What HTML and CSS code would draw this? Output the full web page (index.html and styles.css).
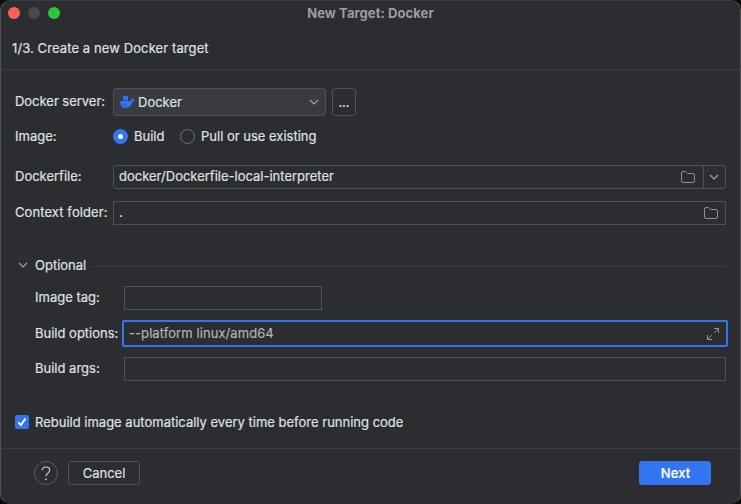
FILE: index.html
```html
<!DOCTYPE html>
<html lang="en">
<head>
<meta charset="utf-8">
<title>New Target: Docker</title>
<link rel="stylesheet" href="styles.css">
</head>
<body>
<div class="window">
  <header class="titlebar">
    <div class="lights"><i class="light red"></i><i class="light gray"></i><i class="light green"></i></div>
    <div class="title">New Target: Docker</div>
  </header>
  <div class="step">1/3. Create a new Docker target</div>
  <main class="form">
    <div class="row server">
      <label class="label">Docker server:</label>
      <div class="combo">
        <svg class="whale" width="15" height="14" viewBox="0 0 15 14"><path fill="#3574f0" d="M3 1h5v4.500000H3zM0 6h10.500000q.7-.5.8-1.300000-.3-1.300000.5-2 .9.700000.9 2h2.200000q-.5 1.900000-2.600000 2.100000Q11 13 5.800000 13 0 13 0 6z"/><path fill="#30363f" d="M3 9h1v1H3zM5 10.500000h1.500000v.8H5z"/></svg>
        <span class="combo-text">Docker</span>
        <svg class="chev" width="10" height="6" viewBox="0 0 10 6"><path d="M1 1l4 4 4-4"/></svg>
      </div>
      <div class="more">...</div>
    </div>
    <div class="row image">
      <div class="label">Image:</div>
      <i class="radio on"></i><span class="build">Build</span>
      <i class="radio"></i><span class="pull">Pull or use existing</span>
    </div>
    <div class="row dockerfile">
      <label class="label">Dockerfile:</label>
      <div class="field rounded">
        <span class="value">docker/Dockerfile-local-interpreter</span>
        <svg class="folder" width="14" height="12" viewBox="0 0 14 12"><path d="M.5 10V2Q.5.5 2 .5h2.500000L6.500000 2.500000h5.500000q1.500000 0 1.500000 1.500000v6q0 1.500000-1.500000 1.500000H2Q.5 11.500000.5 10z"/></svg>
        <div class="drop"><svg class="chev" width="10" height="6" viewBox="0 0 10 6"><path d="M1 1l4 4 4-4"/></svg></div>
      </div>
    </div>
    <div class="row context">
      <label class="label">Context folder:</label>
      <div class="field">
        <span class="value">.</span>
        <svg class="folder" width="14" height="12" viewBox="0 0 14 12"><path d="M.5 10V2Q.5.5 2 .5h2.500000L6.500000 2.500000h5.500000q1.500000 0 1.500000 1.500000v6q0 1.500000-1.500000 1.500000H2Q.5 11.500000.5 10z"/></svg>
      </div>
    </div>
    <div class="group">
      <svg class="chev" width="10" height="6" viewBox="0 0 10 6"><path d="M1 1l4 4 4-4"/></svg>
      <span class="group-title">Optional</span><i class="rule"></i>
    </div>
    <div class="row nested tag"><label class="label">Image tag:</label><div class="field short"></div></div>
    <div class="row nested options">
      <label class="label">Build options:</label>
      <div class="field focused">
        <span class="value">--platform linux/amd64</span>
        <svg class="expand" width="12" height="12" viewBox="0 0 12 12"><path d="M7 .5h4.500000V5M11.500000.5 7.200000 4.800000M.5 7v4.500000H5M.5 11.500000l4.300000-4.300000"/></svg>
      </div>
    </div>
    <div class="row nested args"><label class="label">Build args:</label><div class="field"></div></div>
    <div class="check-row">
      <span class="checkbox"><svg width="14" height="14" viewBox="0 0 14 14"><path d="M3.300000 7.200000l2.600000 2.800000 4.600000-6.600000"/></svg></span>
      <span>Rebuild image automatically every time before running code</span>
    </div>
  </main>
  <footer class="footer">
    <div class="help"><svg width="10" height="15" viewBox="0 0 10 15"><path d="M1.300000 4.300000Q1.300000 1 5 1t3.700000 3.100000Q8.700000 5.600000 7 6.900000 5 8.200000 5 10.300000"/><circle cx="5" cy="13.300000" r=".9"/></svg></div>
    <div class="btn cancel">Cancel</div>
    <div class="btn next">Next</div>
  </footer>
</div>
</body>
</html>
```
FILE: styles.css
```css
* { box-sizing: border-box; }
body {
  margin: 0;
  background: #0b0b0d;
  color: #dfe1e5;
  font: 13px/16px Inter, sans-serif;
  -webkit-text-stroke: .2px;
  overflow: hidden;
}
.window {
  width: 741px;
  height: 504px;
  background: #2b2d30;
  border: 1px solid #515356;
  border-top-color: #3b3c3f;
  border-bottom-color: #303135;
  border-radius: 10px;
  display: flex;
  flex-direction: column;
  white-space: nowrap;
}
svg { display: block; fill: none; flex: none; }
.titlebar { height: 26px; display: grid; grid-template-columns: 1fr auto 1fr; align-items: center; }
.lights { display: flex; gap: 8px; padding: 0 0 2px 7px; }
.light { width: 12px; height: 12px; border-radius: 50%; }
.red { background: #ff5f57; }
.gray { background: #48494b; }
.green { background: #28c840; }
.title { color: #9c9da0; font-weight: 700; padding-bottom: 2px; letter-spacing: .07px; -webkit-text-stroke: 0; }
.step { height: 43px; padding: 13px 0 0 11px; border-bottom: 1px solid #3c3e42; letter-spacing: .1px; }
.form { padding: 18px 14px 0; height: 378px; }
.row { display: flex; align-items: center; height: 24px; }
.label { width: 98px; flex: none; }
.server .label, .dockerfile .label, .context .label,
.dockerfile .value, .context .value { padding-bottom: 2px; }
.server .label { letter-spacing: -.03px; }
.context .label { letter-spacing: .09px; }
.server { height: 28px; }
.combo {
  width: 213px; height: 28px; border: 1px solid #4e5157; border-radius: 3px;
  background: #393b40; display: flex; align-items: center; padding: 0 6px;
}
.combo-text { flex: 1; margin-left: 3px; }
.chev path { stroke: #a4a8af; stroke-width: 1.1; }
.more {
  width: 24px; height: 28px; margin-left: 6px; border: 1px solid #4e5157;
  border-radius: 3px; text-align: center; line-height: 27px;
}
.image { margin-top: 8px; }
.radio { width: 15px; height: 15px; border: 1px solid #6f737a; border-radius: 50%; flex: none; margin-right: 6px; }
.radio.on { border: 5px solid #3574f0; background: #fff; }
.build { width: 46px; }
.dockerfile { margin-top: 17px; }
.field { height: 24px; flex: 1; border: 1px solid #4e5157; display: flex; align-items: center; padding-left: 5px; padding-right: 7px; }
.rounded { border-radius: 3px; padding-right: 0; }
.value { flex: 1; }
.folder path { stroke: #8c9097; }
.drop { width: 22px; height: 22px; margin-left: 8px; padding-right: 1px; border-left: 1px solid #4e5157; display: flex; align-items: center; justify-content: center; }
.context { margin-top: 12px; }
.group { display: flex; align-items: center; height: 16px; margin-top: 32px; padding-left: 3px; }
.group-title { margin-left: 7px; }
.rule { flex: 1; height: 1px; margin: 2px 0 0 6px; background: #3c3e42; }
.nested { padding-left: 20px; }
.nested .label { width: 89px; padding-bottom: 2px; }
.tag { margin-top: 13px; }
.field.short { flex: none; width: 198px; }
.options { margin-top: 10px; height: 27px; }
.focused { height: 27px; border: 2px solid #3574f0; border-radius: 2px; margin: 0 -2px; padding: 0 7px 0 5px; color: #b0b2b6; }
.focused .value { letter-spacing: .07px; padding-bottom: 1px; }
.expand path { stroke: #8f9297; }
.args { margin-top: 10px; }
.check-row { display: flex; align-items: center; height: 16px; margin-top: 33px; }
.checkbox { width: 14px; height: 14px; margin-right: 6px; background: #3574f0; border-radius: 2px; }
.checkbox path { stroke: #fff; stroke-width: 1.8; }
.footer { flex: 1; border-top: 1px solid #3c3e42; display: flex; align-items: flex-start; padding: 12px 29px 0 33px; }
.help { width: 24px; height: 24px; border: 1px solid #5a5d63; border-radius: 50%; display: grid; place-items: center; }
.help path { stroke: #ced0d6; stroke-width: 1.2; }
.help circle { fill: #ced0d6; }
.btn { width: 72px; height: 24px; border: 1px solid #4e5157; border-radius: 3px; text-align: center; line-height: 23px; }
.cancel { margin-left: 10px; }
.next { margin-left: auto; padding-left: 1px; background: #3574f0; border-color: #3574f0; color: #fff; font-weight: 500; letter-spacing: .15px; }
```
